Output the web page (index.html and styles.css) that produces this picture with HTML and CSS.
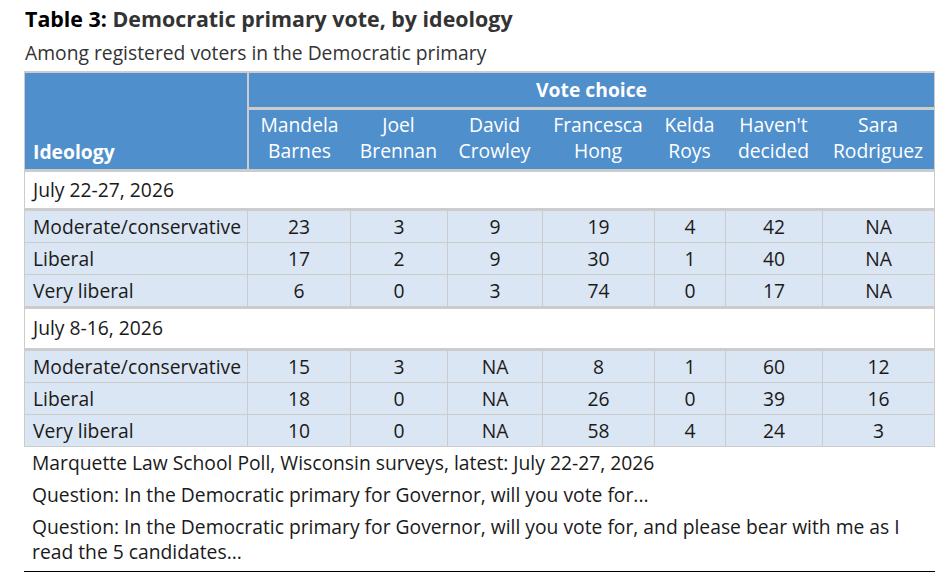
FILE: index.html
```html
<!DOCTYPE html>
<html>
<head>
<meta charset="utf-8">
<link rel="stylesheet" href="styles.css">
</head>
<body>
<div class="wrap">
  <h1 class="title"><span class="label">Table 3:</span> Democratic primary vote, by ideology</h1>
  <p class="subtitle">Among registered voters in the Democratic primary</p>
  <table class="data">
    <colgroup>
      <col class="c-ideo">
      <col class="c-mb">
      <col class="c-jb">
      <col class="c-dc">
      <col class="c-fh">
      <col class="c-kr">
      <col class="c-hd">
      <col class="c-sr">
    </colgroup>
    <thead>
      <tr class="h1">
        <th class="ideo" rowspan="2">Ideology</th>
        <th class="vc" colspan="7">Vote choice</th>
      </tr>
      <tr class="h2">
        <th class="firstcand">Mandela<br>Barnes</th>
        <th>Joel<br>Brennan</th>
        <th>David<br>Crowley</th>
        <th>Francesca<br>Hong</th>
        <th>Kelda<br>Roys</th>
        <th>Haven't<br>decided</th>
        <th>Sara<br>Rodriguez</th>
      </tr>
    </thead>
    <tbody>
      <tr class="group"><td colspan="8">July 22-27, 2026</td></tr>
      <tr class="row"><td>Moderate/conservative</td><td>23</td><td>3</td><td>9</td><td>19</td><td>4</td><td>42</td><td>NA</td></tr>
      <tr class="row"><td>Liberal</td><td>17</td><td>2</td><td>9</td><td>30</td><td>1</td><td>40</td><td>NA</td></tr>
      <tr class="row last"><td>Very liberal</td><td>6</td><td>0</td><td>3</td><td>74</td><td>0</td><td>17</td><td>NA</td></tr>
      <tr class="group second"><td colspan="8">July 8-16, 2026</td></tr>
      <tr class="row"><td>Moderate/conservative</td><td>15</td><td>3</td><td>NA</td><td>8</td><td>1</td><td>60</td><td>12</td></tr>
      <tr class="row"><td>Liberal</td><td>18</td><td>0</td><td>NA</td><td>26</td><td>0</td><td>39</td><td>16</td></tr>
      <tr class="row last"><td>Very liberal</td><td>10</td><td>0</td><td>NA</td><td>58</td><td>4</td><td>24</td><td>3</td></tr>
    </tbody>
  </table>
  <div class="notes">
    <p>Marquette Law School Poll, Wisconsin surveys, latest: July 22-27, 2026</p>
    <p>Question: In the Democratic primary for Governor, will you vote for...</p>
    <p>Question: In the Democratic primary for Governor, will you vote for, and please bear with me as I read the 5 candidates...</p>
  </div>
</div>
</body>
</html>
```
FILE: styles.css
```css
html, body {
  margin: 0;
  padding: 0;
  background: #ffffff;
}
body {
  font-family: "Open Sans", "Liberation Sans", sans-serif;
  color: #1a1a1a;
}
.wrap {
  width: 911px;
  padding: 6px 0 0 24px;
}
.title {
  margin: 0 0 0 1px;
  font-size: 21.4px;
  line-height: 26px;
  font-weight: 700;
  color: #333333;
}
.title .label {
  color: #000000;
}
.subtitle {
  margin: 9px 0 0 1px;
  font-size: 19.3px;
  line-height: 24px;
  color: #333333;
}
.data {
  margin-top: 6px;
  width: 911px;
  border-collapse: separate;
  border-spacing: 0;
  table-layout: fixed;
  font-size: 19.3px;
  border-left: 1px solid #cccccc;
  border-right: 1px solid #cccccc;
  border-top: 2px solid #cccccc;
  border-bottom: 1px solid #cccccc;
}
.data th,
.data td {
  box-sizing: border-box;
}
.c-ideo { width: 222px; }
.c-mb { width: 103px; }
.c-jb { width: 97px; }
.c-dc { width: 95px; }
.c-fh { width: 112px; }
.c-kr { width: 71px; }
.c-hd { width: 97px; }
.c-sr { width: 112px; }
.data th {
  background: #4f8fcc;
  color: #ffffff;
  font-weight: 400;
  line-height: 26px;
  text-align: center;
  white-space: nowrap;
}
.data .h1 th.vc {
  height: 37px;
  padding: 4px 4px 4px;
  font-weight: 700;
  border-left: 2px solid #cccccc;
  border-bottom: 3px solid #cccccc;
}
.data .h2 th {
  height: 62px;
  padding: 2px 0 5px;
  border-bottom: 3px solid #cccccc;
}
.data .h2 th.firstcand {
  border-left: 2px solid #cccccc;
}
.data th.ideo {
  font-weight: 700;
  text-align: left;
  vertical-align: bottom;
  padding: 0 8px 4px;
  border-bottom: 3px solid #cccccc;
}
.data td {
  height: 32px;
  line-height: 24px;
  padding: 4px 0 3px;
  text-align: center;
  background: #dae6f3;
  border-left: 1px solid #cccccc;
  border-bottom: 1px solid #cccccc;
  white-space: nowrap;
}
.data td:first-child {
  text-align: left;
  padding-left: 8px;
  border-left: 0;
}
.data .row.last td {
  height: 31px;
  border-bottom: 0;
}
.data .group td {
  height: 39px;
  background: #ffffff;
  text-align: left;
  padding: 6px 8px 6px;
  border-left: 0;
  border-bottom: 3px solid #cccccc;
}
.data .group.second td {
  height: 45px;
  padding-top: 7px;
  padding-bottom: 8px;
  border-top: 3px solid #cccccc;
}
.notes {
  border-bottom: 1px solid #000000;
  padding: 0 0 4px 8px;
}
.notes p {
  margin: 0;
  font-size: 19.3px;
  line-height: 25px;
  padding: 3px 0 3px;
  color: #1a1a1a;
}
.notes p + p {
  padding-top: 4px;
}
```
